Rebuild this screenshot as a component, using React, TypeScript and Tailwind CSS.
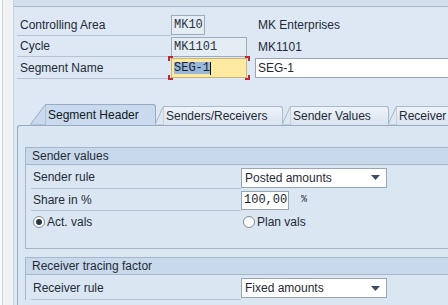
import React from 'react'

function HeaderRow({label, height, children}: {label: string; height: string; children: React.ReactNode}) {
    return (
        <div className={`flex flex-row ${height}`}>
            <div className="w-[154px] shrink-0 h-full flex items-center border-b border-[#b4c4d4] pl-[3px] text-[#1f2a36]">
                {label}
            </div>
            {children}
        </div>
    )
}

function FieldRow({label, underline = true, children}: {label: React.ReactNode; underline?: boolean; children?: React.ReactNode}) {
    return (
        <div className="flex flex-row h-[22px] ml-[5px]">
            <div className={`w-[210px] shrink-0 h-full flex items-center pl-[2px] text-[#1f2a36] ${underline ? 'border-b border-[#b4c4d4]' : ''}`}>
                {label}
            </div>
            <div className="flex items-center">{children}</div>
        </div>
    )
}

function Dropdown({value}: {value: string}) {
    return (
        <div className="w-[146px] shrink-0 h-[20px] bg-white border border-[#98a6b4] flex items-center justify-between pl-[3px] pr-[6px] text-[#1f2a36]">
            <span>{value}</span>
            <svg width="9" height="5" viewBox="0 0 9 5">
                <path d="M0 0 L9 0 L4.5 5 Z" fill="#3e4c5c" />
            </svg>
        </div>
    )
}

function Radio({checked, label}: {checked?: boolean; label: string}) {
    return (
        <div className="flex items-center gap-[2px]">
            <div className="w-[12px] h-[12px] rounded-full border border-[#7d8a97] bg-white flex items-center justify-center">
                {checked && <div className="w-[6px] h-[6px] rounded-full bg-[#2b3640]" />}
            </div>
            <span className="text-[#1f2a36]">{label}</span>
        </div>
    )
}

function Tab({label, active, width}: {label: string; active?: boolean; width: string}) {
    return (
        <div className={`flex flex-row shrink-0 ${active ? 'h-[21px]' : 'h-[19px]'} -mr-[1px]`}>
            <svg width={active ? 16 : 9} height={active ? 21 : 19} className="shrink-0">
                {active ? (
                    <path d="M0 21 L15 1 Q16 0 17 0 L16 0 L16 21 Z" fill="#c9daee" stroke="#98adc4" strokeWidth="1" />
                ) : (
                    <path d="M0 19 L8 1 L9 0 L9 19 Z" fill="#dfe8f2" stroke="#a9bacb" strokeWidth="1" />
                )}
            </svg>
            <div className={`${width} h-full flex items-center border-t border-r rounded-tr-[3px] ${active ? 'bg-[#c9daee] border-[#98adc4] text-[#101820]' : 'bg-gradient-to-b from-[#eef3f9] to-[#d9e4ef] border-[#a9bacb] text-[#1f2a36]'}`}>
                <span className="pl-[2px] whitespace-nowrap">{label}</span>
            </div>
        </div>
    )
}

export default function App() {
    return (
        <div className="w-[448px] h-[305px] overflow-hidden flex flex-row font-['Liberation_Sans',Arial,sans-serif] text-[12px] leading-none">
            <div className="w-[14px] shrink-0 h-full bg-[#f1f2f3] flex flex-row border-r border-[#c9d3dd]">
                <div className="w-[3px] h-full bg-[#fafafa] border-r border-[#cfd3d8]" />
            </div>
            <div className="flex-1 flex flex-col bg-[#dde8f4] min-w-0 overflow-hidden">
                <div className="h-[7px] bg-[#d2dfec] border-b border-[#a6b9cc] shrink-0" />

                <div className="flex flex-col pl-[3px] mt-[7px]">
                    <HeaderRow label="Controlling Area" height="h-[22px]">
                        <div className="w-[84px] shrink-0 flex items-center">
                            <div className="w-[34px] h-[20px] bg-[#e4ecf4] border border-[#9eabb8] flex items-center pl-[2px] font-['Liberation_Mono',monospace] text-[#2a3440]">
                                MK10
                            </div>
                        </div>
                        <div className="flex items-center pl-[3px] text-[#1f2a36] whitespace-nowrap">MK Enterprises</div>
                    </HeaderRow>
                    <HeaderRow label="Cycle" height="h-[21px]">
                        <div className="w-[84px] shrink-0 flex items-center">
                            <div className="w-[76px] h-[20px] bg-[#e4ecf4] border border-[#9eabb8] flex items-center pl-[2px] font-['Liberation_Mono',monospace] text-[#2a3440]">
                                MK1101
                            </div>
                        </div>
                        <div className="flex items-center pl-[3px] text-[#1f2a36]">MK1101</div>
                    </HeaderRow>
                    <HeaderRow label="Segment Name" height="h-[22px]">
                        <div className="w-[84px] shrink-0 flex items-center">
                            <div className="relative">
                                <div className="w-[76px] h-[20px] bg-[#fde9a0] border border-[#c8b777] flex items-center pl-[2px] font-['Liberation_Mono',monospace] text-[#1a2330]">
                                    <span className="bg-[#99b8d9]">SEG-1</span>
                                    <span className="w-[1px] h-[13px] bg-[#111]" />
                                </div>
                                <div className="absolute -left-[3px] -top-[2px] w-[5px] h-[5px] border-l-2 border-t-2 border-[#c3262d]" />
                                <div className="absolute -right-[3px] -top-[2px] w-[5px] h-[5px] border-r-2 border-t-2 border-[#c3262d]" />
                                <div className="absolute -left-[3px] -bottom-[2px] w-[5px] h-[5px] border-l-2 border-b-2 border-[#c3262d]" />
                                <div className="absolute -right-[3px] -bottom-[2px] w-[5px] h-[5px] border-r-2 border-b-2 border-[#c3262d]" />
                            </div>
                        </div>
                        <div className="flex items-center">
                            <div className="w-[200px] shrink-0 h-[20px] bg-white border border-[#98a6b4] flex items-center pl-[2px] text-[#1f2a36]">
                                SEG-1
                            </div>
                        </div>
                    </HeaderRow>
                </div>

                <div className="flex flex-row items-end h-[21px] mt-[25px] pl-[16px] shrink-0">
                    <Tab label="Segment Header" active width="w-[110px]" />
                    <Tab label="Senders/Receivers" width="w-[119px]" />
                    <Tab label="Sender Values" width="w-[98px]" />
                    <Tab label="Receiver Tracing" width="w-[110px]" />
                </div>

                <div className="flex-1 ml-[3px] bg-[#dae6f2] border-l border-t border-[#98adc4] rounded-tl-[3px] pl-[7px] pt-[21px] flex flex-col">
                    <div className="border-l border-t border-b border-[#a4b7cb] flex flex-col pb-[15px]">
                        <div className="h-[17px] bg-[#c8d9eb] border-b border-[#a4b7cb] flex items-center pl-[6px] text-[#1f2a36]">
                            Sender values
                        </div>
                        <div className="h-[1px]" />
                        <div className="flex flex-row h-[23px] ml-[5px]">
                            <div className="w-[210px] shrink-0 h-full flex items-center pl-[2px] border-b border-[#b4c4d4] text-[#1f2a36]">
                                Sender rule
                            </div>
                            <div className="flex items-center">
                                <Dropdown value="Posted amounts" />
                            </div>
                        </div>
                        <FieldRow label="Share in %">
                            <div className="w-[48px] h-[19px] bg-white border border-[#98a6b4] flex items-center pl-[2px] font-['Liberation_Mono',monospace] text-[#1a2330]">
                                100,00
                            </div>
                            <span className="ml-[12px] text-[10px] font-['Liberation_Mono',monospace] text-[#1f2a36]">%</span>
                        </FieldRow>
                        <FieldRow label={<Radio checked label="Act. vals" />} underline={false}>
                            <div className="ml-[2px]">
                                <Radio label="Plan vals" />
                            </div>
                        </FieldRow>
                    </div>

                    <div className="mt-[8px] border-l border-t border-[#a4b7cb] flex flex-col">
                        <div className="h-[17px] bg-[#c8d9eb] border-b border-[#a4b7cb] flex items-center pl-[6px] text-[#1f2a36]">
                            Receiver tracing factor
                        </div>
                        <div className="h-[1px]" />
                        <div className="flex flex-row h-[24px] ml-[5px]">
                            <div className="w-[210px] shrink-0 h-full flex items-center pl-[2px] border-b border-[#b4c4d4] text-[#1f2a36]">
                                Receiver rule
                            </div>
                            <div className="flex items-center">
                                <Dropdown value="Fixed amounts" />
                            </div>
                        </div>
                    </div>
                </div>
            </div>
        </div>
    )
}
